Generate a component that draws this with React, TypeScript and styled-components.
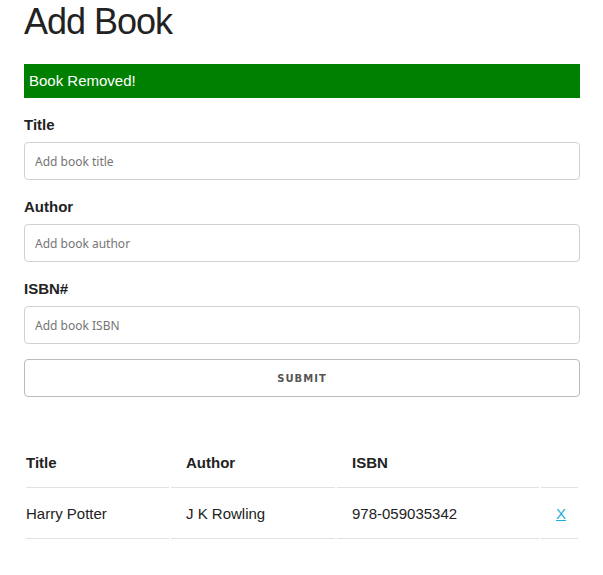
import * as React from 'react';
import styled, { createGlobalStyle } from 'styled-components';

const GlobalStyle = createGlobalStyle`
  html, body {
    margin: 0;
    padding: 0;
    background: #fff;
  }
  body {
    font-family: "Liberation Sans", Arial, Helvetica, sans-serif;
    font-size: 15px;
    line-height: 1.6;
    color: #222;
  }
  * {
    box-sizing: border-box;
  }
`;

const Container = styled.div`
  width: 556px;
  margin-left: 24px;
`;

const Heading = styled.h1`
  margin: 0 0 21px;
  font-size: 36px;
  font-weight: 400;
  line-height: 1.2;
  letter-spacing: -1px;
`;

const Alert = styled.div<{ $kind: 'success' | 'error' }>`
  background: ${props => (props.$kind === 'success' ? '#008000' : '#d00')};
  color: #fff;
  padding: 5px 5px;
  margin-bottom: 15px;
`;

const Label = styled.label`
  display: block;
  margin-bottom: 5px;
  font-weight: 700;
`;

const Input = styled.input`
  display: block;
  width: 100%;
  height: 38px;
  margin: 0 0 15px;
  padding: 6px 10px;
  border: 1px solid #d1d1d1;
  border-radius: 4px;
  background: #fff;
  font-family: "Noto Sans", "Open Sans", sans-serif;
  font-size: 12px;
  color: #222;
  outline: none;

  &::placeholder {
    color: #757575;
  }
`;

const SubmitButton = styled.button`
  display: block;
  width: 100%;
  height: 38px;
  margin: 0 0 40px;
  padding: 0 30px;
  border: 1px solid #bbb;
  border-radius: 4px;
  background: transparent;
  color: #555;
  font-family: "DejaVu Sans", Verdana, sans-serif;
  font-size: 10px;
  font-weight: 700;
  line-height: 38px;
  letter-spacing: 1px;
  text-transform: uppercase;
  cursor: pointer;
`;

const Table = styled.table`
  width: 100%;
  border-collapse: separate;
  border-spacing: 2px;
`;

const Th = styled.th<{ $width?: number }>`
  text-align: left;
  padding: 12px 15px;
  border-bottom: 1px solid #e1e1e1;
  font-weight: 700;
  width: ${props => (props.$width ? `${props.$width}px` : 'auto')};

  &:first-child {
    padding-left: 0;
  }
  &:last-child {
    padding-right: 0;
  }
`;

const Td = styled.td`
  text-align: left;
  padding: 12px 15px;
  border-bottom: 1px solid #e1e1e1;

  &:first-child {
    padding-left: 0;
  }
  &:last-child {
    padding-right: 0;
  }
`;

const DeleteLink = styled.a`
  color: #1eaedb;
  text-decoration: underline;
  cursor: pointer;
`;

interface Book {
  title: string;
  author: string;
  isbn: string;
}

const books: Book[] = [
  { title: 'Harry Potter', author: 'J K Rowling', isbn: '978-059035342' },
];

export default function App() {
  return (
    <Container>
      <GlobalStyle />
      <Heading>Add Book</Heading>
      <Alert $kind="success">Book Removed!</Alert>
      <form onSubmit={e => e.preventDefault()}>
        <Label htmlFor="title">Title</Label>
        <Input id="title" type="text" placeholder="Add book title" />
        <Label htmlFor="author">Author</Label>
        <Input id="author" type="text" placeholder="Add book author" />
        <Label htmlFor="isbn">ISBN#</Label>
        <Input id="isbn" type="text" placeholder="Add book ISBN" />
        <SubmitButton type="submit">Submit</SubmitButton>
      </form>
      <Table>
        <thead>
          <tr>
            <Th $width={143}>Title</Th>
            <Th $width={164}>Author</Th>
            <Th $width={202}>ISBN</Th>
            <Th />
          </tr>
        </thead>
        <tbody>
          {books.map(book => (
            <tr key={book.isbn}>
              <Td>{book.title}</Td>
              <Td>{book.author}</Td>
              <Td>{book.isbn}</Td>
              <Td>
                <DeleteLink href="#">X</DeleteLink>
              </Td>
            </tr>
          ))}
        </tbody>
      </Table>
    </Container>
  );
}
